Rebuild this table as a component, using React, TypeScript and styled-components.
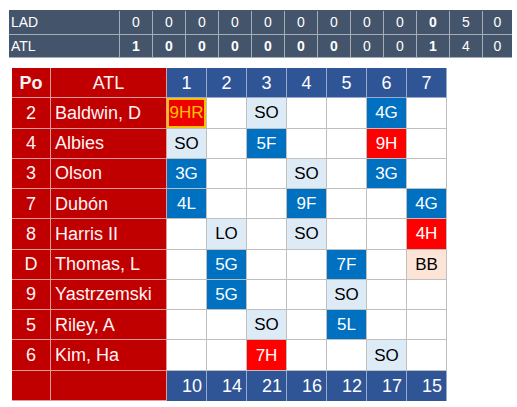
import React from "react";
import styled, { createGlobalStyle, css } from "styled-components";

type Kind = "out" | "k" | "hit" | "hr" | "walk";

interface PlayerRow {
  po: string;
  name: string;
  plays: Record<number, [string, Kind]>;
}

const LINE = [
  { team: "LAD", runs: ["0", "0", "0", "0", "0", "0", "0", "0", "0", "0", "5", "0"], bold: [9] },
  { team: "ATL", runs: ["1", "0", "0", "0", "0", "0", "0", "0", "0", "1", "4", "0"], bold: [0, 1, 2, 3, 4, 5, 6, 9] },
];

const ROWS: PlayerRow[] = [
  { po: "2", name: "Baldwin, D", plays: { 1: ["9HR", "hr"], 3: ["SO", "k"], 6: ["4G", "out"] } },
  { po: "4", name: "Albies", plays: { 1: ["SO", "k"], 3: ["5F", "out"], 6: ["9H", "hit"] } },
  { po: "3", name: "Olson", plays: { 1: ["3G", "out"], 4: ["SO", "k"], 6: ["3G", "out"] } },
  { po: "7", name: "Dubón", plays: { 1: ["4L", "out"], 4: ["9F", "out"], 7: ["4G", "out"] } },
  { po: "8", name: "Harris II", plays: { 2: ["LO", "k"], 4: ["SO", "k"], 7: ["4H", "hit"] } },
  { po: "D", name: "Thomas, L", plays: { 2: ["5G", "out"], 5: ["7F", "out"], 7: ["BB", "walk"] } },
  { po: "9", name: "Yastrzemski", plays: { 2: ["5G", "out"], 5: ["SO", "k"] } },
  { po: "5", name: "Riley, A", plays: { 3: ["SO", "k"], 5: ["5L", "out"] } },
  { po: "6", name: "Kim, Ha", plays: { 3: ["7H", "hit"], 6: ["SO", "k"] } },
];

const TOTALS = ["10", "14", "21", "16", "12", "17", "15"];
const INNINGS = [1, 2, 3, 4, 5, 6, 7];

const GlobalStyle = createGlobalStyle`
  body {
    margin: 0;
    background: #ffffff;
    font-family: "Liberation Sans", Arial, sans-serif;
  }
`;

export default function App() {
  return (
    <>
      <GlobalStyle />
      <Page>
        <LineScore>
          {LINE.map((l) => (
            <React.Fragment key={l.team}>
              <TeamCell>{l.team}</TeamCell>
              {l.runs.map((r, i) => (
                <RunCell key={i} $bold={l.bold.includes(i)}>
                  {r}
                </RunCell>
              ))}
            </React.Fragment>
          ))}
        </LineScore>

        <Sheet>
          <RedCell $bold $center>Po</RedCell>
          <RedCell $center>ATL</RedCell>
          {INNINGS.map((n) => (
            <HeadCell key={n}>{n}</HeadCell>
          ))}

          {ROWS.map((row) => (
            <React.Fragment key={row.name}>
              <RedCell $center>{row.po}</RedCell>
              <RedCell>{row.name}</RedCell>
              {INNINGS.map((n) => {
                const play = row.plays[n];
                return play ? (
                  <PlayCell key={n} $kind={play[1]}>
                    {play[0]}
                  </PlayCell>
                ) : (
                  <EmptyCell key={n} />
                );
              })}
            </React.Fragment>
          ))}

          <RedCell />
          <RedCell />
          {TOTALS.map((t, i) => (
            <TotalCell key={i}>{t}</TotalCell>
          ))}
        </Sheet>
      </Page>
    </>
  );
}

const Page = styled.div`
  padding: 10px 0 0 9px;
  display: flex;
  flex-direction: column;
  align-items: flex-start;
`;

const LineScore = styled.div`
  display: grid;
  grid-template-columns: 111px repeat(11, 33px) 29px;
  grid-template-rows: 23.5px 23.5px;
  background: #44546a;
  border-top: 1px solid #44546a;
`;

const TeamCell = styled.div`
  display: flex;
  align-items: center;
  padding-left: 2px;
  color: #ffffff;
  font-size: 14px;
  border-right: 1px solid #a5adb8;
  border-bottom: 1px solid #a5adb8;
`;

const RunCell = styled.div<{ $bold?: boolean }>`
  display: flex;
  align-items: center;
  justify-content: center;
  color: #ffffff;
  font-size: 14px;
  font-weight: ${(p) => (p.$bold ? 700 : 400)};
  border-right: 1px solid #a5adb8;
  border-bottom: 1px solid #a5adb8;
  &:last-child,
  &:nth-child(13) {
    border-right: none;
  }
`;

const Sheet = styled.div`
  margin: 10px 0 0 3px;
  display: grid;
  grid-template-columns: 39px 116px repeat(7, 40px);
  grid-template-rows: repeat(11, 30.27px);
  font-size: 18px;
`;

const cellBase = css`
  box-sizing: border-box;
  display: flex;
  align-items: center;
  line-height: 1;
`;

const RedCell = styled.div<{ $bold?: boolean; $center?: boolean }>`
  ${cellBase};
  background: #c00000;
  color: #fff4f4;
  justify-content: ${(p) => (p.$center ? "center" : "flex-start")};
  padding-left: ${(p) => (p.$center ? "0" : "4px")};
  font-weight: ${(p) => (p.$bold ? 700 : 400)};
  border-right: 1px solid #e39a9a;
  border-bottom: 1px solid #e39a9a;
`;

const HeadCell = styled.div`
  ${cellBase};
  justify-content: center;
  background: #2f5597;
  color: #ffffff;
  border-right: 1px solid #97aacb;
  border-bottom: 1px solid #97aacb;
`;

const EmptyCell = styled.div`
  ${cellBase};
  background: #ffffff;
  border-right: 1px solid #bfbfbf;
  border-bottom: 1px solid #bfbfbf;
`;

const kindStyles: Record<Kind, ReturnType<typeof css>> = {
  out: css`
    background: #0070c0;
    color: #ffffff;
  `,
  k: css`
    background: #ddebf7;
    color: #000000;
  `,
  hit: css`
    background: #ff0000;
    color: #ffffff;
  `,
  hr: css`
    background: #ee0000;
    color: #ffc000;
    box-shadow: inset 0 0 0 2px #ffc000;
  `,
  walk: css`
    background: #fce4d6;
    color: #000000;
  `,
};

const PlayCell = styled.div<{ $kind: Kind }>`
  ${cellBase};
  justify-content: center;
  font-size: 17px;
  border-right: 1px solid #bfbfbf;
  border-bottom: 1px solid #bfbfbf;
  ${(p) => kindStyles[p.$kind]};
`;

const TotalCell = styled.div`
  ${cellBase};
  justify-content: flex-end;
  padding-right: 4px;
  background: #2f5597;
  color: #ffffff;
  border-right: 1px solid #97aacb;
`;
